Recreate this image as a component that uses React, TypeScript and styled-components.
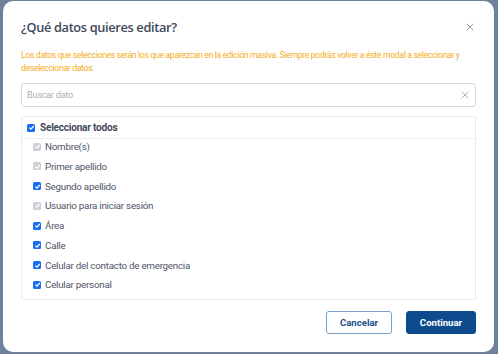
import React, { useState } from "react";
import styled, { createGlobalStyle } from "styled-components";

const GlobalStyle = createGlobalStyle`
  html, body {
    margin: 0;
    padding: 0;
    background: #6f809c;
    font-family: Roboto, "Liberation Sans", sans-serif;
  }
`;

const Backdrop = styled.div`
  width: 498px;
  height: 354px;
  box-sizing: border-box;
  padding: 1px 4px 2px 3px;
  background: #6f809c;
`;

const Modal = styled.div`
  width: 491px;
  height: 351px;
  box-sizing: border-box;
  background: #fff;
  border-radius: 10px;
  padding: 16px 18px 18px 18px;
  display: flex;
  flex-direction: column;
`;

const Header = styled.div`
  height: 20px;
  display: flex;
  align-items: center;
  justify-content: space-between;
`;

const Title = styled.h1`
  margin: 0;
  font-family: "Open Sans", "Liberation Sans", sans-serif;
  font-size: 12.8px;
  font-weight: 600;
  color: #414859;
  letter-spacing: -0.35px;
`;

const CloseButton = styled.button`
  width: 12px;
  height: 12px;
  padding: 0;
  border: none;
  background: none;
  display: flex;
  align-items: center;
  justify-content: center;
  cursor: pointer;
`;

const Notice = styled.p`
  margin: 11.5px 0 0 0;
  font-size: 8.7px;
  line-height: 13px;
  letter-spacing: -0.35px;
  color: #f5ad22;
`;

const SearchBox = styled.div`
  margin-top: 8.5px;
  height: 24px;
  box-sizing: border-box;
  border: 1px solid #d6dae1;
  border-radius: 3px;
  display: flex;
  align-items: center;
  padding: 0 6px 0 5px;
`;

const SearchInput = styled.input`
  flex: 1;
  border: none;
  outline: none;
  font-family: Roboto, "Liberation Sans", sans-serif;
  font-size: 9px;
  letter-spacing: -0.2px;
  color: #4b5166;
  padding: 0;
  &::placeholder {
    color: #a9aeb8;
  }
`;

const ListBox = styled.div`
  margin-top: 9px;
  height: 184px;
  box-sizing: border-box;
  border: 1px solid #e9ebef;
  border-radius: 2px;
  display: flex;
  flex-direction: column;
  overflow: hidden;
`;

const AllRow = styled.label`
  height: 22px;
  flex-shrink: 0;
  display: flex;
  align-items: center;
  gap: 5px;
  padding: 0 0 0 5px;
  box-sizing: border-box;
  border-bottom: 1px solid #eceef1;
  font-size: 10px;
  font-weight: 700;
  letter-spacing: -0.2px;
  color: #434a5c;
`;

const Items = styled.div`
  display: flex;
  flex-direction: column;
  gap: 4.75px;
  padding: 0 0 5px 11px;
`;

const ItemRow = styled.label`
  height: 15px;
  flex-shrink: 0;
  display: flex;
  align-items: center;
  gap: 4px;
  font-size: 9.8px;
  letter-spacing: -0.25px;
  color: #505669;
`;

const Box = styled.span<{ $on: boolean; $disabled?: boolean }>`
  width: 8px;
  height: 8px;
  border-radius: 1.5px;
  display: inline-flex;
  align-items: center;
  justify-content: center;
  background: ${(p) => (p.$disabled ? "#cdd0d5" : p.$on ? "#1a6ef2" : "#fff")};
  border: ${(p) => (p.$on || p.$disabled ? "none" : "1px solid #9aa0aa")};
  flex-shrink: 0;
`;

const Footer = styled.div`
  margin-top: 11px;
  display: flex;
  justify-content: flex-end;
  gap: 14px;
`;

const Button = styled.button<{ $primary?: boolean }>`
  height: 23px;
  box-sizing: border-box;
  border-radius: 3px;
  font-family: Roboto, "Liberation Sans", sans-serif;
  font-size: 9.6px;
  font-weight: 700;
  cursor: pointer;
  width: ${(p) => (p.$primary ? "70px" : "66px")};
  background: ${(p) => (p.$primary ? "#0d4a8e" : "#fff")};
  color: ${(p) => (p.$primary ? "#fff" : "#1d4f8a")};
  border: 1px solid ${(p) => (p.$primary ? "#0d4a8e" : "#7ba0c9")};
`;

const Check = ({ on, disabled }: { on: boolean; disabled?: boolean }) => (
  <Box $on={on} $disabled={disabled}>
    {(on || disabled) && (
      <svg width="7" height="7" viewBox="0 0 10 10">
        <path d="M2 5.2 L4.2 7.3 L8.2 2.8" stroke="#fff" strokeWidth="1.8" fill="none" />
      </svg>
    )}
  </Box>
);

const XIcon = ({ size, color }: { size: number; color: string }) => (
  <svg width={size} height={size} viewBox="0 0 10 10">
    <path d="M1 1 L9 9 M9 1 L1 9" stroke={color} strokeWidth="1.1" />
  </svg>
);

const fields = [
  { label: "Nombre(s)", disabled: true },
  { label: "Primer apellido", disabled: true },
  { label: "Segundo apellido" },
  { label: "Usuario para iniciar sesión", disabled: true },
  { label: "Área" },
  { label: "Calle" },
  { label: "Celular del contacto de emergencia" },
  { label: "Celular personal" },
];

export default function App() {
  const [query, setQuery] = useState("");
  return (
    <>
      <GlobalStyle />
      <Backdrop>
        <Modal>
          <Header>
            <Title>¿Qué datos quieres editar?</Title>
            <CloseButton aria-label="Cerrar">
              <XIcon size={8} color="#8a909c" />
            </CloseButton>
          </Header>
          <Notice>
            Los datos que selecciones serán los que aparezcan en la edición masiva. Siempre podrás
            volver a éste modal a seleccionar y deseleccionar datos.
          </Notice>
          <SearchBox>
            <SearchInput
              placeholder="Buscar dato"
              value={query}
              onChange={(e) => setQuery(e.target.value)}
            />
            <XIcon size={8} color="#a3a8b2" />
          </SearchBox>
          <ListBox>
            <AllRow>
              <Check on />
              Seleccionar todos
            </AllRow>
            <Items>
              {fields.map((f) => (
                <ItemRow key={f.label}>
                  <Check on={!f.disabled} disabled={f.disabled} />
                  {f.label}
                </ItemRow>
              ))}
            </Items>
          </ListBox>
          <Footer>
            <Button>Cancelar</Button>
            <Button $primary>Continuar</Button>
          </Footer>
        </Modal>
      </Backdrop>
    </>
  );
}
